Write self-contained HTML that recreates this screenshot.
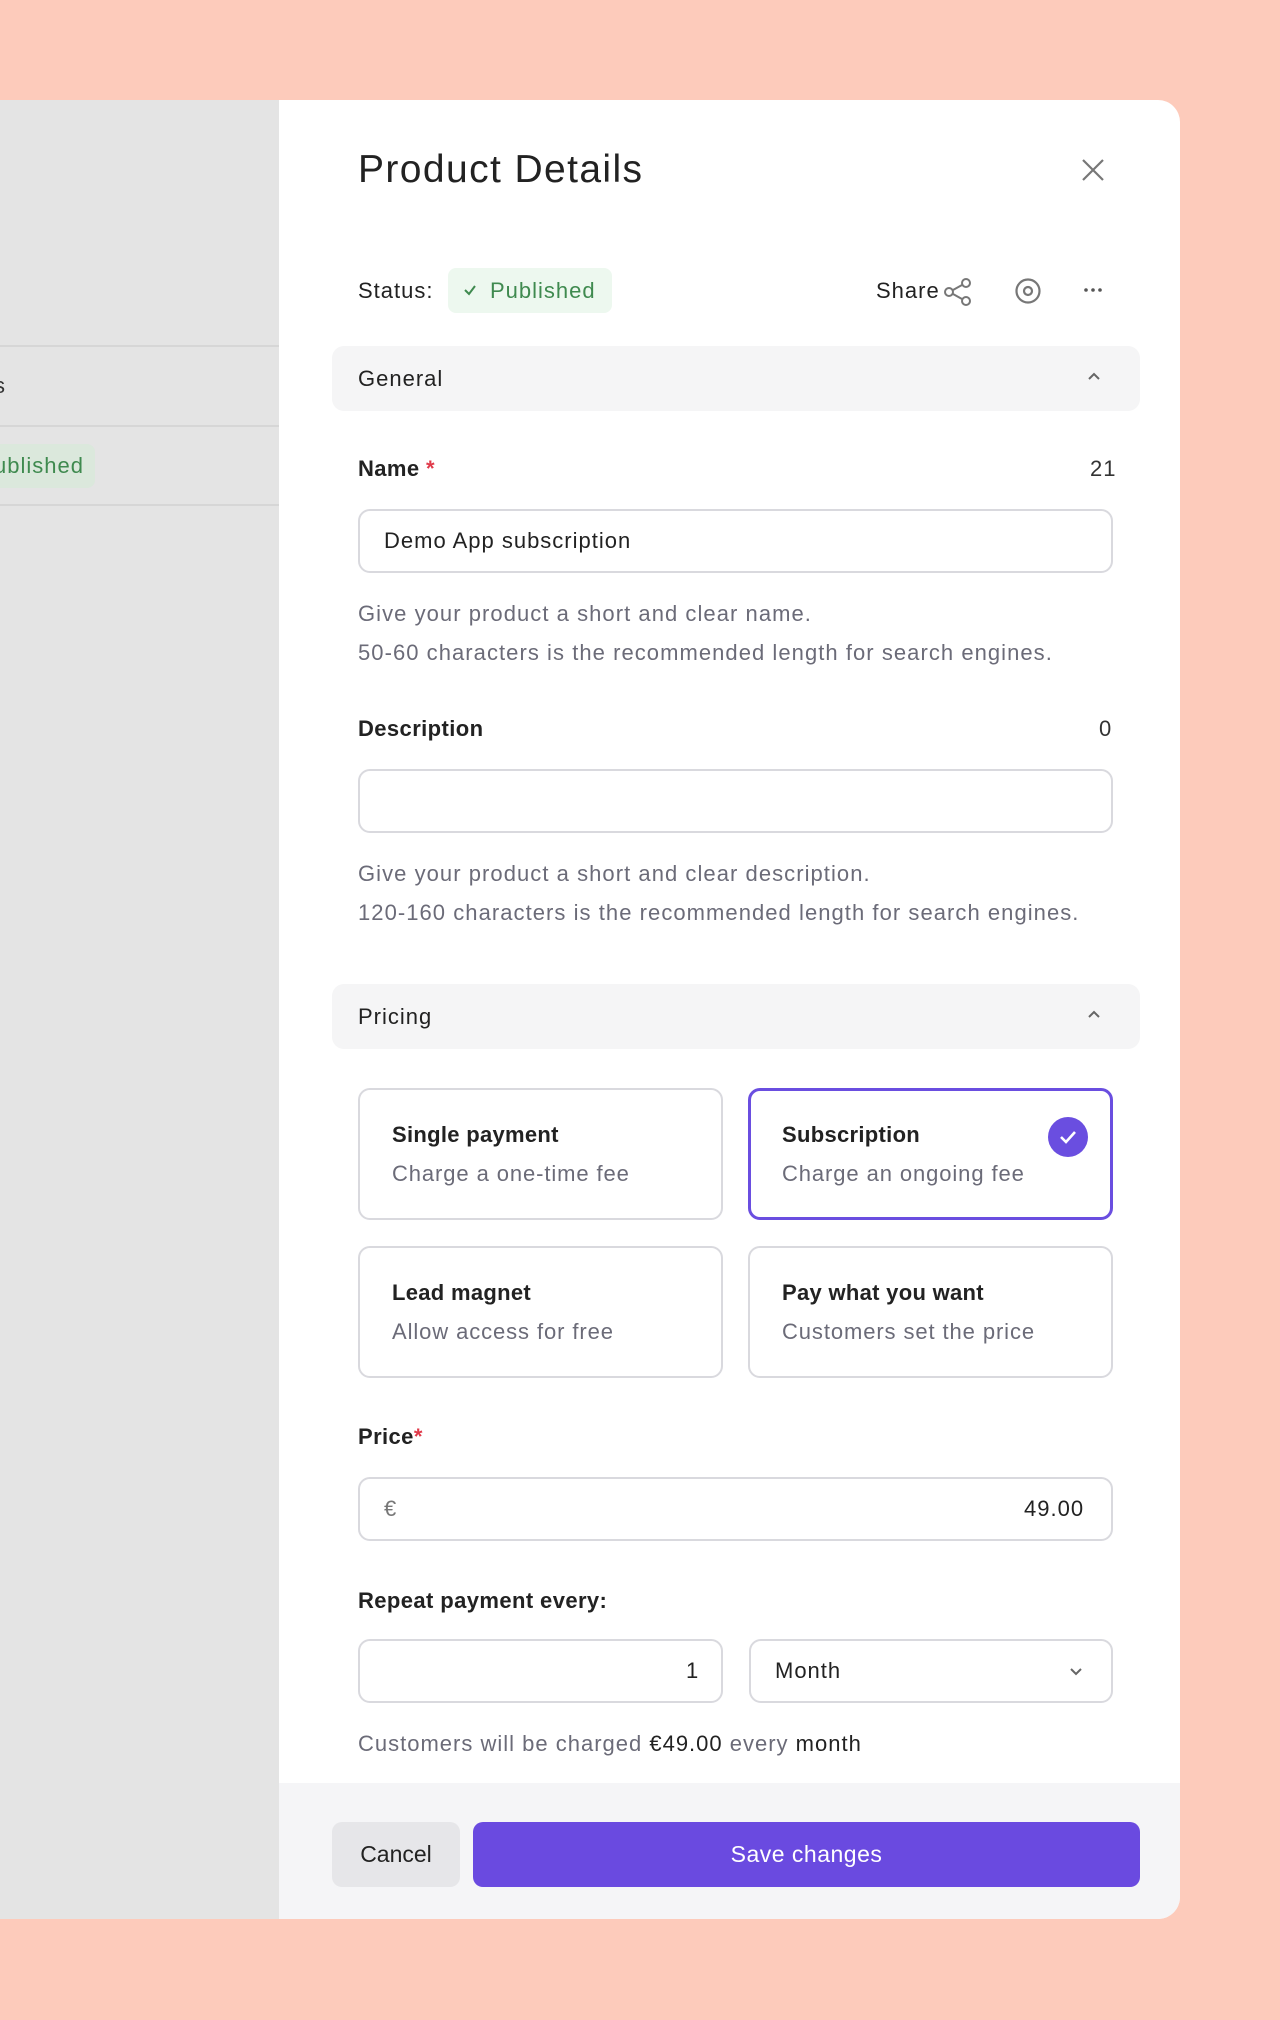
<!DOCTYPE html>
<html><head><meta charset="utf-8"><style>
*{box-sizing:border-box;margin:0;padding:0}
body{width:1280px;height:2020px;background:#fdcbbb;font-family:"Liberation Sans",sans-serif;position:relative;overflow:hidden;color:#222}
.a{position:absolute}
.left{left:0;top:100px;width:279px;height:1819px;background:#e4e4e4}
.hl{left:0;width:279px;height:2px;background:#d6d6d6}
.panel{left:279px;top:100px;width:901px;height:1819px;background:#fff;border-radius:0 22px 22px 0;overflow:hidden}
.t{font-size:22px;line-height:26px;letter-spacing:1px}
.lab{font-size:22px;font-weight:bold;color:#222;letter-spacing:0.4px}
.help{font-size:22px;color:#6b6b78;line-height:39px;letter-spacing:1.05px}
.sec{left:332px;width:808px;height:65px;background:#f5f5f6;border-radius:12px}
.inp{background:#fff;border:2px solid #d9d9de;border-radius:12px;height:64px}
.card{border:2px solid #d9d9de;border-radius:12px;width:365px;height:132px}
.card b{position:absolute;left:32px;top:32px;font-size:22px;color:#222;letter-spacing:0.3px}
.card span{position:absolute;left:32px;top:71px;font-size:22px;color:#6b6b78;letter-spacing:0.9px}
</style></head><body>
<div class="a left"></div>
<div class="a hl" style="top:345px"></div>
<div class="a hl" style="top:425px"></div>
<div class="a hl" style="top:504px"></div>
<div class="a t" style="left:-6px;top:373px;color:#333">s</div>
<div class="a" style="left:0;top:444px;width:95px;height:44px;background:#dbe8dc;border-radius:0 8px 8px 0"></div>
<div class="a t" style="left:-6px;top:453px;color:#3f8a4f">ublished</div>
<div class="a panel"></div>
<div class="a" style="left:358px;top:148px;font-size:39px;color:#222;letter-spacing:1.4px">Product Details</div>
<svg class="a" style="left:1081px;top:158px" width="24" height="24" viewBox="0 0 24 24"><path d="M2 2L22 22M22 2L2 22" stroke="#777" stroke-width="2.2"/></svg>
<div class="a t" style="left:358px;top:278px;color:#222">Status:</div>
<div class="a" style="left:448px;top:268px;width:164px;height:45px;background:#edf8ef;border-radius:8px"></div>
<svg class="a" style="left:463px;top:283px" width="14" height="14" viewBox="0 0 14 14"><path d="M2 7L6 11L12 3" stroke="#3f8a4f" stroke-width="2" fill="none"/></svg>
<div class="a t" style="left:490px;top:278px;color:#3f8a4f">Published</div>
<div class="a t" style="left:876px;top:278px;color:#222">Share</div>
<svg class="a" style="left:943px;top:277px" width="30" height="30" viewBox="0 0 30 30" fill="none" stroke="#777" stroke-width="2"><circle cx="23" cy="6" r="4"/><circle cx="6" cy="15" r="4"/><circle cx="23" cy="24" r="4"/><path d="M10 13L19 8M10 17L19 22"/></svg>
<svg class="a" style="left:1014px;top:277px" width="28" height="28" viewBox="0 0 28 28" fill="none" stroke="#777" stroke-width="2.2"><circle cx="14" cy="14" r="11.5"/><circle cx="14" cy="14" r="4"/></svg>
<svg class="a" style="left:1083px;top:287px" width="20" height="6" viewBox="0 0 20 6" fill="#555"><circle cx="3" cy="3" r="1.8"/><circle cx="10" cy="3" r="1.8"/><circle cx="17" cy="3" r="1.8"/></svg>
<div class="a sec" style="top:346px"></div>
<div class="a t" style="left:358px;top:366px">General</div>
<svg class="a" style="left:1087px;top:371px" width="14" height="10" viewBox="0 0 14 10"><path d="M2 8L7 3L12 8" stroke="#666" stroke-width="2" fill="none"/></svg>
<div class="a lab" style="left:358px;top:456px">Name <span style="color:#e03a4a">*</span></div>
<div class="a t" style="left:1090px;top:456px;color:#333">21</div>
<div class="a inp" style="left:358px;top:509px;width:755px"></div>
<div class="a t" style="left:384px;top:528px;color:#222">Demo App subscription</div>
<div class="a help" style="left:358px;top:594px">Give your product a short and clear name.<br>50-60 characters is the recommended length for search engines.</div>
<div class="a lab" style="left:358px;top:716px">Description</div>
<div class="a t" style="left:1099px;top:716px;color:#333">0</div>
<div class="a inp" style="left:358px;top:769px;width:755px"></div>
<div class="a help" style="left:358px;top:854px">Give your product a short and clear description.<br>120-160 characters is the recommended length for search engines.</div>
<div class="a sec" style="top:984px"></div>
<div class="a t" style="left:358px;top:1004px">Pricing</div>
<svg class="a" style="left:1087px;top:1009px" width="14" height="10" viewBox="0 0 14 10"><path d="M2 8L7 3L12 8" stroke="#666" stroke-width="2" fill="none"/></svg>
<div class="a card" style="left:358px;top:1088px"><b>Single payment</b><span>Charge a one-time fee</span></div>
<div class="a card" style="left:748px;top:1088px;border:3px solid #6a4ee0"><b style="left:31px;top:31px">Subscription</b><span style="left:31px;top:70px">Charge an ongoing fee</span>
<svg class="a" style="left:296px;top:25px" width="42" height="42" viewBox="0 0 42 42"><circle cx="21" cy="21" r="20" fill="#6a4ee0"/><path d="M14 21L19 26L28 16" stroke="#fff" stroke-width="2.6" fill="none"/></svg></div>
<div class="a card" style="left:358px;top:1246px"><b>Lead magnet</b><span>Allow access for free</span></div>
<div class="a card" style="left:748px;top:1246px"><b>Pay what you want</b><span>Customers set the price</span></div>
<div class="a lab" style="left:358px;top:1424px">Price<span style="color:#e03a4a">*</span></div>
<div class="a inp" style="left:358px;top:1477px;width:755px"></div>
<div class="a t" style="left:384px;top:1496px;color:#777">€</div>
<div class="a t" style="left:1024px;top:1496px;color:#222">49.00</div>
<div class="a lab" style="left:358px;top:1588px">Repeat payment every:</div>
<div class="a inp" style="left:358px;top:1639px;width:365px"></div>
<div class="a t" style="left:686px;top:1658px">1</div>
<div class="a inp" style="left:749px;top:1639px;width:364px"></div>
<div class="a t" style="left:775px;top:1658px">Month</div>
<svg class="a" style="left:1069px;top:1666px" width="14" height="10" viewBox="0 0 14 10"><path d="M2 3L7 8L12 3" stroke="#666" stroke-width="2" fill="none"/></svg>
<div class="a t" style="left:358px;top:1731px;color:#6b6b78">Customers will be charged <span style="color:#222">€49.00</span> every <span style="color:#222">month</span></div>
<div class="a" style="left:279px;top:1783px;width:901px;height:136px;background:#f5f5f7;border-radius:0 0 22px 0"></div>
<div class="a" style="left:332px;top:1822px;width:128px;height:65px;background:#e6e6e9;border-radius:10px;font-size:23px;line-height:65px;text-align:center;color:#222">Cancel</div>
<div class="a" style="left:473px;top:1822px;width:667px;height:65px;background:#6a4ae0;border-radius:10px;font-size:23px;line-height:65px;text-align:center;color:#fff;letter-spacing:0.5px">Save changes</div>
</body></html>
